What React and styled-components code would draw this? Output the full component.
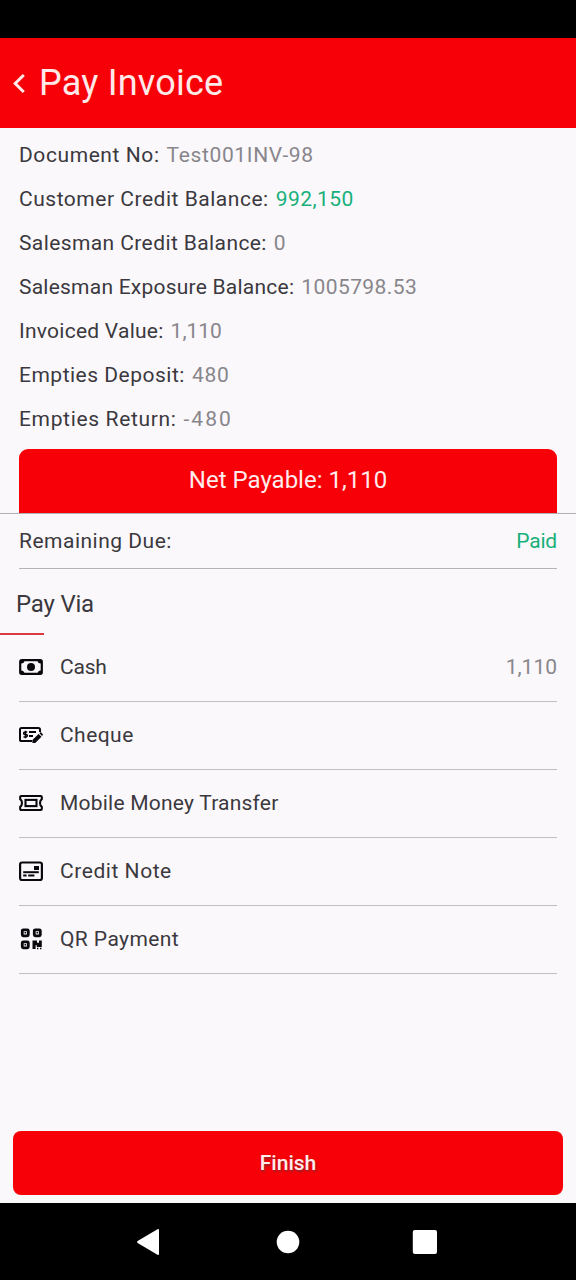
import React from 'react';
import styled, { createGlobalStyle } from 'styled-components';

const GlobalStyle = createGlobalStyle`
* { box-sizing: border-box; }
body {
  margin: 0;
  background: #faf8fb;
  font-family: Roboto, "Liberation Sans", sans-serif;
}
`
const Screen = styled.div`
width: 576px;
height: 1280px;
display: flex;
flex-direction: column;
background: #faf8fb;
overflow: hidden;
`
const StatusBar = styled.div`
height: 38px;
background: #000;
`
const Header = styled.header`
height: 90px;
background: #f80008;
display: flex;
align-items: center;
gap: 14px;
padding: 0 0 0 12px;
`
const Text = styled.span`
margin: 0;
font-size: ${(p) => p.$size || 21}px;
line-height: 1;
font-weight: ${(p) => p.$weight || 400};
color: ${(p) => p.$color || '#3b393e'};
letter-spacing: ${(p) => p.$track || 0}px;
white-space: nowrap;
`
const Details = styled.div`
padding: 5px 19px 0;
`
const DetailRow = styled.div`
height: 44px;
display: flex;
align-items: center;
gap: 7px;
`
const NetPayable = styled.div`
height: 64px;
margin: 8px 19px 0;
padding-bottom: 2px;
border-radius: 9px 9px 0 0;
background: #f80008;
display: flex;
align-items: center;
justify-content: center;
`
const Remaining = styled.div`
border-top: 1px solid #b2b0b4;
padding: 0 19px;
`
const RemainingRow = styled.div`
height: 55px;
border-bottom: 1px solid #b5b3b7;
display: flex;
align-items: center;
justify-content: space-between;
`
const PayVia = styled.div`
height: 64px;
padding: 6px 16px 0;
display: flex;
align-items: center;
`
const Underline = styled.div`
width: 44px;
height: 2px;
margin-bottom: -1px;
background: #dc3a41;
`
const Methods = styled.div`
flex: 1;
padding: 0 19px;
`
const Method = styled.div`
height: 68px;
border-bottom: 1px solid #c0bec2;
display: flex;
align-items: center;
gap: 17px;

svg {
  flex: none;
  margin-bottom: 2px;
}
`
const Amount = styled(Text)`
margin-left: auto;
`
const FinishButton = styled.button`
height: 64px;
margin: 0 13px 8px;
padding-bottom: 1px;
border: 0;
border-radius: 8px;
background: #f80008;
font-family: inherit;
text-shadow: 1px 2px 2px rgba(90, 60, 60, 0.6);
`
const NavBar = styled.div`
height: 77px;
background: #000;
display: flex;
align-items: center;
justify-content: center;
`

const BackIcon = () => (
  <svg width="13" height="22" viewBox="0 0 13 22" fill="none" stroke="#ffe9e9" strokeWidth="3">
    <path d="M11.8 3 3.2 11.5 11.8 20" />
  </svg>
);

const CashIcon = () => (
  <svg width="24" height="24" viewBox="0 0 24 24">
    <rect x="1.2" y="5.2" width="21.6" height="13.6" rx="1.6" fill="none" stroke="#09080c" strokeWidth="2.2" />
    <path d="M1 5h4.5a3.5 3.5 0 0 1-3.5 3.5H1zM23 5h-4.5a3.5 3.5 0 0 0 3.500 3.500h1zM1 19h4.500a3.500 3.500 0 0 0-3.500-3.500H1zM23 19h-4.500a3.500 3.500 0 0 1 3.500-3.500h1z" fill="#09080c" />
    <circle cx="12" cy="12" r="4" fill="#09080c" />
  </svg>
);

const ChequeIcon = () => (
  <svg width="24" height="24" viewBox="0 0 24 24" fill="none" stroke="#09080c" strokeWidth="2">
    <path d="M13 18H2.6Q1 18 1 16.4V6.6Q1 5 2.6 5h16.8Q21 5 21 6.6V9" />
    <path d="M8.2 9.1H6.1Q4.6 9.1 4.6 10.2T6 11.4h1Q8.4 11.4 8.4 12.6T7 13.9H4.5M6.5 7.7v7.6" strokeWidth="1.5" />
    <path d="M10 9h7M10 13h4" strokeWidth="2" />
    <path d="m13.4 17 6.2-6 2.9 2.7-6.3 6.2h-2.8zM20.5 10.3l1.3-1.2 2.4 2.5-1.2 1.3z" fill="#09080c" stroke="none" />
  </svg>
);

const TicketIcon = () => (
  <svg width="24" height="24" viewBox="0 0 24 24" fill="none" stroke="#09080c" strokeWidth="2.1">
    <path d="M2.200 5h19.600q1 0 1 1v2.200q-1.800 1.300-1.800 3.800t1.800 3.800V18q0 1-1 1H2.200q-1 0-1-1v-2.200q1.800-1.300 1.800-3.800T1.200 8.200V6q0-1 1-1z" />
    <rect x="6.5" y="8.9" width="11" height="6.200" />
  </svg>
);

const CreditIcon = () => (
  <svg width="24" height="24" viewBox="0 0 24 24" fill="none" stroke="#09080c" strokeWidth="2">
    <rect x="1.1" y="3.5" width="21.8" height="17.5" rx="2" strokeWidth="2.2" />
    <path d="M4.2 13.2h15.6" />
    <path d="M15 7h5v4h-5z" fill="#09080c" stroke="none" />
    <path d="M4.2 16.6h3.4M9.2 16.6h6.2" />
  </svg>
);

const QrIcon = () => (
  <svg width="24" height="24" viewBox="0 0 24 24" fill="none" stroke="#09080c" strokeWidth="2.8">
    <rect x="3.3" y="2.8" width="6" height="6" rx="1" />
    <rect x="15.3" y="2.8" width="6" height="6" rx="1" />
    <rect x="3.3" y="14.8" width="6" height="6" rx="1" />
    <path d="M5.5 5h1.6v1.6H5.500zM17.500 5h1.600v1.600h-1.600zM5.500 17h1.600v1.600H5.500z" fill="#09080c" stroke="none" />
    <path d="M13.500 13.500H18v2.200h2v-2.200h2.800v6.500h-5v-1.800h-1.200V22h-3.100zM18 20.800h1.400v1.400H18zM21 20.800h1.400v1.400H21z" fill="#09080c" stroke="none" />
  </svg>
);

const GREEN = '#17b07a';
const GREY = '#88868b';

const details = [
  { label: 'Document No:', value: 'Test001INV-98', track: 0.58, valueTrack: 0.64 },
  { label: 'Customer Credit Balance:', value: '992,150', color: GREEN, track: 0.52, valueTrack: 0.45 },
  { label: 'Salesman Credit Balance:', value: '0', track: 0.4 },
  { label: 'Salesman Exposure Balance:', value: '1005798.53', track: 0.23, valueTrack: 0.42 },
  { label: 'Invoiced Value:', value: '1,110', track: 0.25 },
  { label: 'Empties Deposit:', value: '480', track: 0.5, valueTrack: 0.7 },
  { label: 'Empties Return:', value: '-480', track: 0.66, valueTrack: 2 },
];

const methods = [
  { name: 'Cash', Icon: CashIcon, amount: '1,110', track: -0.2 },
  { name: 'Cheque', Icon: ChequeIcon, track: 0.45 },
  { name: 'Mobile Money Transfer', Icon: TicketIcon, track: 0.22 },
  { name: 'Credit Note', Icon: CreditIcon, track: 0.55 },
  { name: 'QR Payment', Icon: QrIcon, track: 0.42 },
];

function App() {
  return (
    <Screen>
      <GlobalStyle />
      <StatusBar />
      <Header>
        <BackIcon />
        <Text as="h1" $size={36} $color="#ffe9e9" $track={0.22}>Pay Invoice</Text>
      </Header>

      <Details>
        {details.map((d) => (
          <DetailRow key={d.label}>
            <Text $track={d.track}>{d.label}</Text>
            <Text $color={d.color || GREY} $track={d.valueTrack}>{d.value}</Text>
          </DetailRow>
        ))}
      </Details>

      <NetPayable>
        <Text $size={24} $color="#ffecec">Net Payable: 1,110</Text>
      </NetPayable>

      <Remaining>
        <RemainingRow>
          <Text $track={0.5}>Remaining Due:</Text>
          <Text $color={GREEN} $track={-0.2}>Paid</Text>
        </RemainingRow>
      </Remaining>

      <PayVia>
        <Text $size={24} $track={-0.2}>Pay Via</Text>
      </PayVia>
      <Underline />

      <Methods>
        {methods.map(({ name, Icon, amount, track }) => (
          <Method key={name}>
            <Icon />
            <Text $track={track}>{name}</Text>
            {amount && <Amount $color={GREY}>{amount}</Amount>}
          </Method>
        ))}
      </Methods>

      <FinishButton>
        <Text $size={21} $weight={500} $color="#ffecec">Finish</Text>
      </FinishButton>

      <NavBar>
        <svg width="320" height="30" viewBox="128 0 320 30" fill="#fff">
          <path d="M157.5 2.2Q159 1.5 159 3v24q0 1.5-1.5.8L137.6 16q-1.3-1 0-2z" />
          <circle cx="288" cy="15" r="11.3" />
          <rect x="412.8" y="3" width="24.2" height="24" rx="2" />
        </svg>
      </NavBar>
    </Screen>
  );
}

export default App;
